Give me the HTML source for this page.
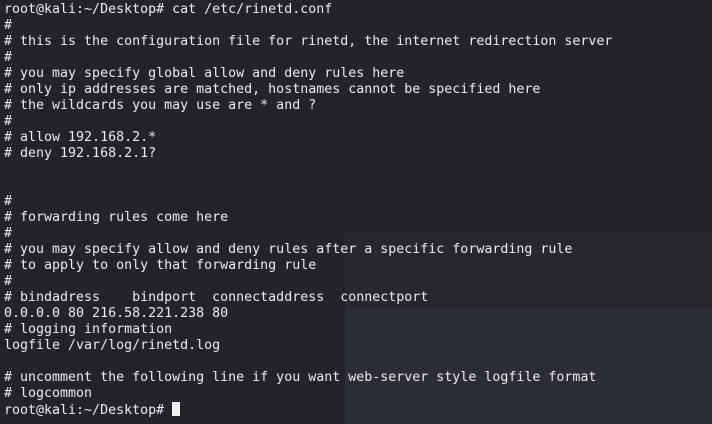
<!DOCTYPE html>
<html><head><meta charset="utf-8"><style>
html,body{margin:0;padding:0;width:712px;height:424px;overflow:hidden;background:#222429;}
.p1{position:absolute;left:345px;top:232px;width:367px;height:76px;background:#26282e;}
.p2{position:absolute;left:345px;top:308px;width:367px;height:116px;background:#2c2e35;}
pre{position:absolute;left:4px;top:2px;margin:0;font-family:"DejaVu Sans Mono","Liberation Mono",monospace;font-size:13.3px;line-height:16px;color:#ececec;}
.cur{display:inline-block;width:8px;height:14px;background:#f0f0f0;vertical-align:-2px;}
</style></head><body>
<div class="p1"></div><div class="p2"></div>
<pre>root@kali:~/Desktop# cat /etc/rinetd.conf
#
# this is the configuration file for rinetd, the internet redirection server
#
# you may specify global allow and deny rules here
# only ip addresses are matched, hostnames cannot be specified here
# the wildcards you may use are * and ?
#
# allow 192.168.2.*
# deny 192.168.2.1?


#
# forwarding rules come here
#
# you may specify allow and deny rules after a specific forwarding rule
# to apply to only that forwarding rule
#
# bindadress    bindport  connectaddress  connectport
0.0.0.0 80 216.58.221.238 80
# logging information
logfile /var/log/rinetd.log

# uncomment the following line if you want web-server style logfile format
# logcommon
root@kali:~/Desktop# <span class="cur"></span></pre>
</body></html>
